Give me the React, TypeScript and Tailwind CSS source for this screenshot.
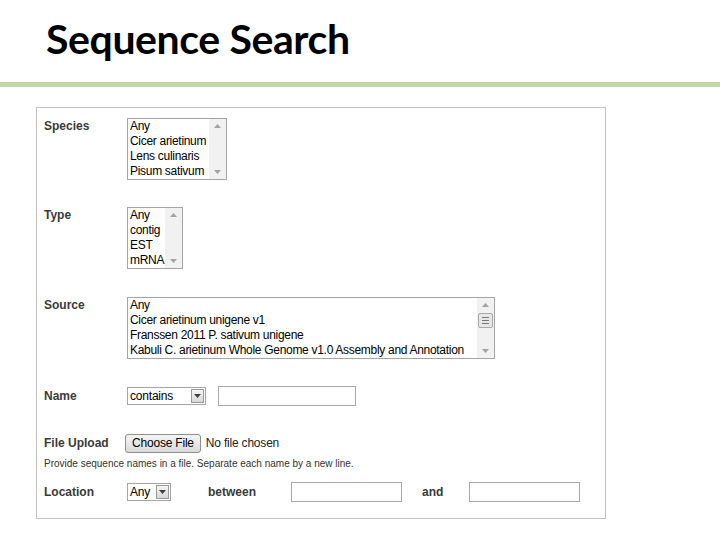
import React from "react";

const ui = "font-['Liberation_Sans',Arial,sans-serif]";

function Arrow({ up, dark }: { up?: boolean; dark?: boolean }) {
  return (
    <svg width="7" height="4" viewBox="0 0 7 4">
      <path
        d={up ? "M0 4 L3.5 0 L7 4 Z" : "M0 0 L3.5 4 L7 0 Z"}
        fill={dark ? "#404040" : "#a3a3a3"}
      />
    </svg>
  );
}

function ListBox({
  items,
  width,
  thumb,
}: {
  items: string[];
  width: string;
  thumb?: boolean;
}) {
  return (
    <div
      className={`${width} h-[62px] flex border border-[#a5a5a5] bg-white overflow-hidden`}
    >
      <div className="flex-1 overflow-hidden pl-[2px] text-[12px] leading-[15px] tracking-[-0.3px] text-black whitespace-nowrap">
        {items.map((it) => (
          <div key={it}>{it}</div>
        ))}
      </div>
      <div className="w-[17px] bg-[#f1f1f1] flex flex-col items-center justify-between py-[5px] relative">
        <Arrow up />
        {thumb && (
          <div className="absolute left-[1px] top-[15px] w-[15px] h-[15px] bg-[#e6e6e6] border border-[#a8a8a8] rounded-[2px] flex flex-col items-center justify-center gap-[2px]">
            <div className="w-[7px] h-px bg-[#777]" />
            <div className="w-[7px] h-px bg-[#777]" />
            <div className="w-[7px] h-px bg-[#777]" />
          </div>
        )}
        <Arrow />
      </div>
    </div>
  );
}

function Select({ value, width }: { value: string; width: string }) {
  return (
    <div
      className={`${width} h-[18px] border border-[#a5a5a5] bg-white flex items-center justify-between pl-[2px] pr-[1px] text-[12px] tracking-[-0.2px] text-black`}
    >
      <span className="leading-none">{value}</span>
      <div className="w-[13px] h-[14px] border border-[#9a9a9a] bg-gradient-to-b from-[#f6f6f6] to-[#d8d8d8] flex items-center justify-center">
        <Arrow dark />
      </div>
    </div>
  );
}

function Label({ children, top }: { children: React.ReactNode; top?: boolean }) {
  return (
    <div
      className={`w-[83px] shrink-0 text-[12px] leading-[15px] font-bold text-[#3a3a3a] ${top ? "pt-[1px]" : ""}`}
    >
      {children}
    </div>
  );
}

export default function App() {
  return (
    <div className="w-[720px] h-[540px] bg-white overflow-hidden">
      <div className="h-[82px] pl-[46px] pt-[15px]">
        <h1 className="font-['Lato',sans-serif] font-bold text-[41px] leading-[48px] text-black tracking-[-0.4px]">
          Sequence Search
        </h1>
      </div>
      <div className="h-[5px] bg-[#c7d5a0]" />

      <div
        className={`${ui} ml-[36px] mt-[20px] w-[570px] h-[412px] border border-[#c3c3c3] pl-[7px] pt-[10px]`}
      >
        <div className="flex items-start">
          <Label top>Species</Label>
          <ListBox
            width="w-[100px]"
            items={["Any", "Cicer arietinum", "Lens culinaris", "Pisum sativum"]}
          />
        </div>

        <div className="flex items-start mt-[27px]">
          <Label top>Type</Label>
          <ListBox width="w-[56px]" items={["Any", "contig", "EST", "mRNA"]} />
        </div>

        <div className="flex items-start mt-[28px]">
          <Label top>Source</Label>
          <ListBox
            width="w-[368px]"
            thumb
            items={[
              "Any",
              "Cicer arietinum unigene v1",
              "Franssen 2011 P. sativum unigene",
              "Kabuli C. arietinum Whole Genome v1.0 Assembly and Annotation",
            ]}
          />
        </div>

        <div className="flex items-center mt-[27px] h-[20px]">
          <Label>Name</Label>
          <Select value="contains" width="w-[79px]" />
          <input className="ml-[12px] w-[138px] h-[20px] border border-[#aaaaaa] bg-white outline-none" />
        </div>

        <div className="flex items-center mt-[27px] h-[20px]">
          <div className="w-[81px] shrink-0 text-[12px] leading-[15px] font-bold text-[#3a3a3a]">
            File Upload
          </div>
          <button className="h-[19px] px-[6px] border border-[#8f8f8f] rounded-[3px] bg-gradient-to-b from-[#f5f5f5] to-[#dadada] text-[12px] tracking-[-0.2px] leading-none text-black">
            Choose File
          </button>
          <span className="ml-[5px] text-[12px] tracking-[-0.2px] text-[#222]">No file chosen</span>
        </div>

        <div className="mt-[4px] text-[10px] leading-[14px] text-[#333]">
          Provide sequence names in a file. Separate each name by a new line.
        </div>

        <div className="flex items-center mt-[11px] h-[20px]">
          <Label>Location</Label>
          <Select value="Any" width="w-[44px]" />
          <div className="ml-[37px] w-[83px] text-[12px] font-bold text-[#3a3a3a]">between</div>
          <input className="w-[111px] h-[20px] border border-[#aaaaaa] bg-white outline-none" />
          <div className="ml-[20px] w-[47px] text-[12px] font-bold text-[#3a3a3a]">and</div>
          <input className="w-[111px] h-[20px] border border-[#aaaaaa] bg-white outline-none" />
        </div>
      </div>
    </div>
  );
}
